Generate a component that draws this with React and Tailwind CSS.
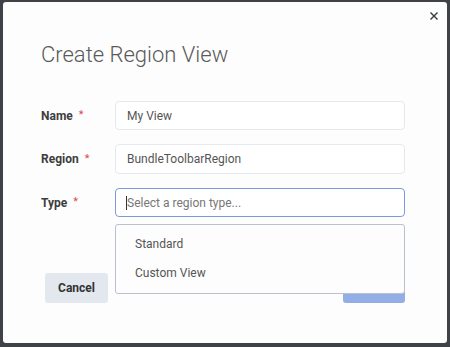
import React from 'react';

const font = { fontFamily: 'Roboto, "Noto Sans", sans-serif' };

const Field = ({ label, children }) => (
  <div className="flex items-center">
    <div className="w-[74px] flex items-center text-[12px] font-bold text-[#3d3d3d]">
      {label}
      <span className="ml-[6px] text-[#e0474c] text-[11px] font-normal">*</span>
    </div>
    <div className="flex-1 relative">{children}</div>
  </div>
);

const App = () => {
  return (
    <div
      className="w-[450px] h-[347px] bg-[#3f4347] pt-[2px] pl-[3px] pr-[3px] pb-[4px]"
      style={font}
    >
      <div className="relative h-full rounded-[3px] bg-[#fdfdfd] pl-[38px] pr-[42px] pt-[40px]">
        {/* close */}
        <button className="absolute top-[8px] right-[7px] w-[12px] h-[12px] flex items-center justify-center text-[#333]">
          <svg width="8" height="8" viewBox="0 0 8 8">
            <path d="M0.5 0.5L7.5 7.5M7.5 0.5L0.5 7.5" stroke="#3a3a3a" strokeWidth="1.4" />
          </svg>
        </button>

        <h2 className="text-[22px] leading-[26px] font-light text-[#5a5a5a]">Create Region View</h2>

        <div className="mt-[33px] flex flex-col gap-[14px]">
          <Field label="Name">
            <div className="h-[29px] border border-[#e5e8ee] rounded-[4px] bg-white flex items-center pl-[11px] text-[12px] text-[#555]">
              My View
            </div>
          </Field>
          <Field label="Region">
            <div className="h-[30px] border border-[#e5e8ee] rounded-[4px] bg-white flex items-center pl-[11px] text-[12px] text-[#555]">
              BundleToolbarRegion
            </div>
          </Field>
          <Field label="Type">
            <div className="h-[29px] border border-[#7c9ade] rounded-[4px] bg-white flex items-center pl-[11px] text-[12px] text-[#777]">
              <span className="w-px h-[14px] bg-[#333] -ml-px"></span>
              Select a region type...
            </div>
            <div className="absolute left-0 right-0 top-full mt-[7px] z-10 h-[70px] border border-[#b9c1cd] rounded-[3px] bg-[#fdfdfd] pt-[4px] text-[12px] text-[#555]">
              <div className="h-[29px] flex items-center pl-[19px]">Standard</div>
              <div className="h-[29px] flex items-center pl-[19px]">Custom View</div>
            </div>
          </Field>
        </div>

        <div className="mt-[56px] flex justify-between pl-[4px]">
          <button className="w-[63px] h-[30px] rounded-[3px] bg-[#e3e7ee] text-[12px] font-bold text-[#333]">
            Cancel
          </button>
          <button className="w-[62px] h-[30px] rounded-[3px] bg-[#93ade5] text-[12px] font-bold text-white">
            Create
          </button>
        </div>
      </div>
    </div>
  );
};

export default App;
